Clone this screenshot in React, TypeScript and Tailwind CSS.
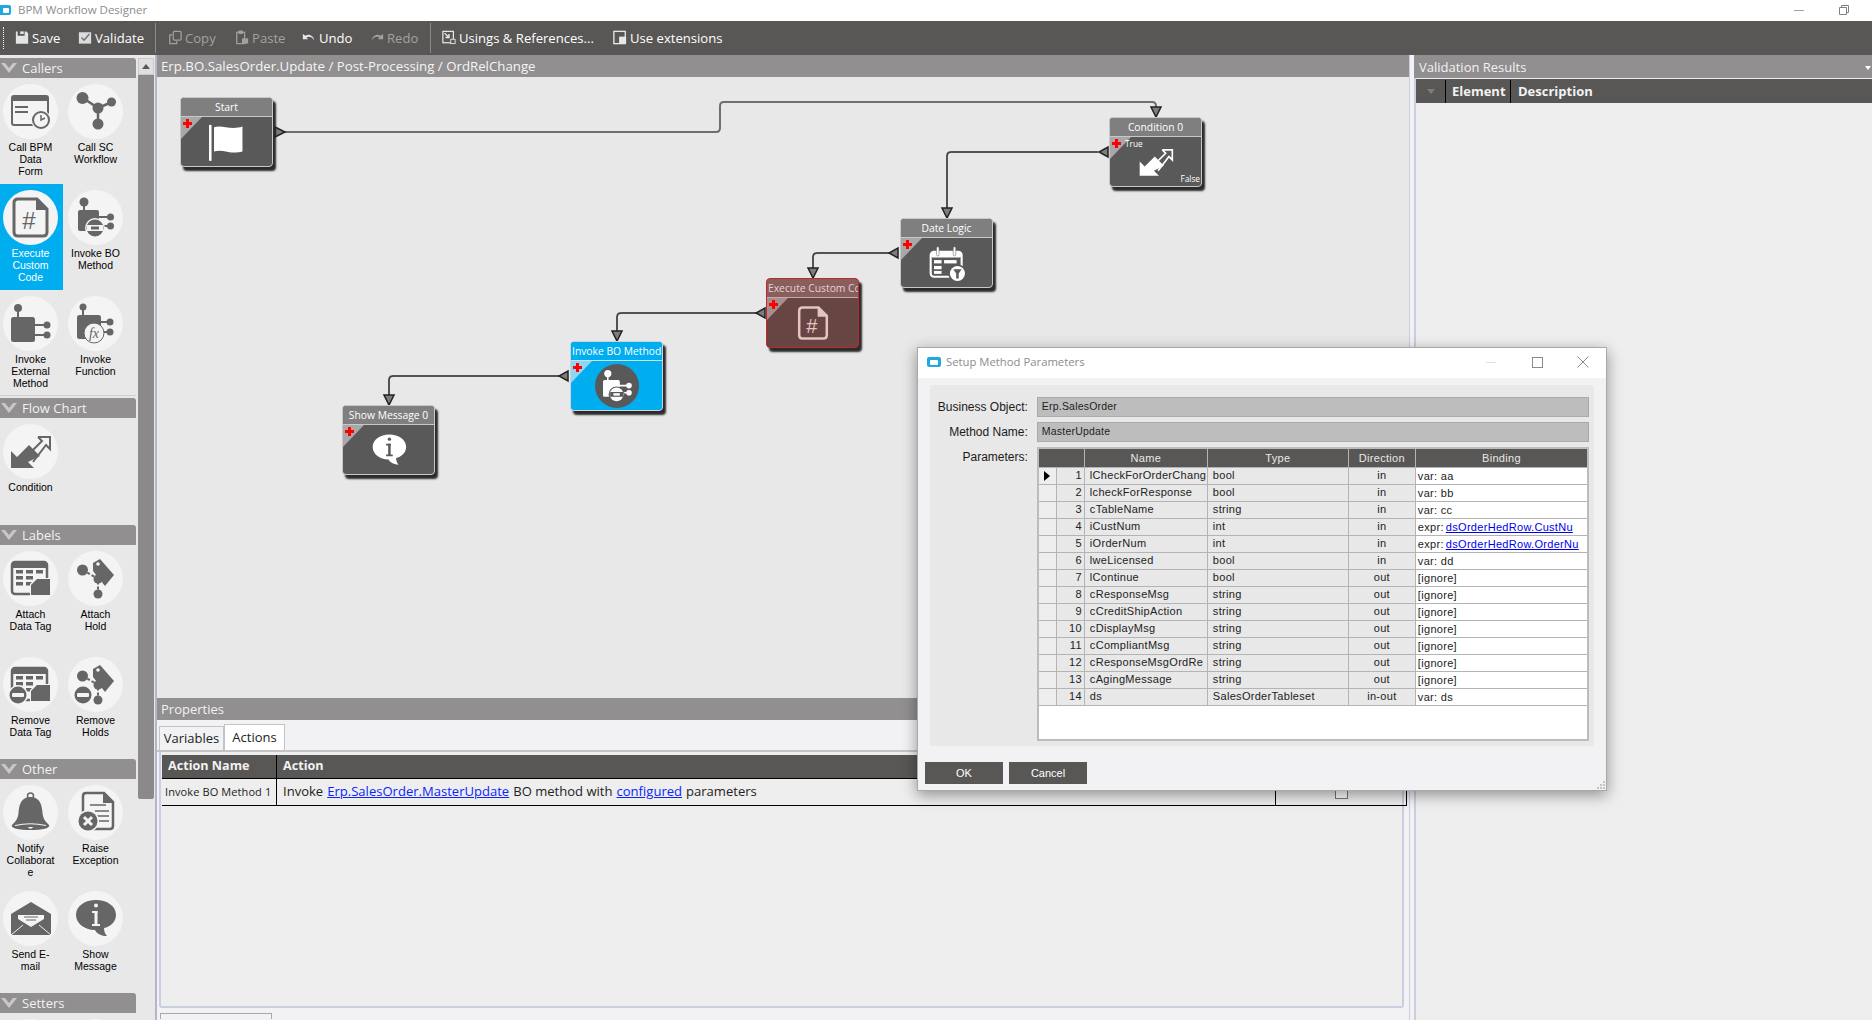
import type { ReactNode } from 'react'

const D = '#666666'

type IconProps = { c?: string; h?: string }

function Svg({ children }: { children: ReactNode }) {
  return (
    <svg viewBox="0 0 55 55" width="55" height="55">
      {children}
    </svg>
  )
}

function CallBpmIcon({ c = D, h = '#f4f4f4' }: IconProps) {
  return (
    <Svg>
      <rect x="9" y="12" width="36" height="29" rx="2" fill="none" stroke={c} strokeWidth="2" />
      <rect x="9" y="12" width="36" height="5" fill={c} />
      <rect x="12" y="22" width="13" height="2" fill={c} />
      <rect x="12" y="27" width="13" height="2" fill={c} />
      <circle cx="38" cy="36" r="10" fill={h} />
      <circle cx="38" cy="36" r="8" fill={h} stroke={c} strokeWidth="2" />
      <path d="M38 31v5l4 -2" fill="none" stroke={c} strokeWidth="1.5" />
    </Svg>
  )
}

function CallScIcon({ c = D }: IconProps) {
  return (
    <Svg>
      <path d="M15 14L30 24L44 18M30 24V40" fill="none" stroke={c} strokeWidth="2.5" />
      <circle cx="14.5" cy="14" r="6" fill={c} />
      <circle cx="43.5" cy="18" r="4.5" fill={c} />
      <circle cx="30" cy="24" r="5.5" fill={c} />
      <circle cx="30" cy="40" r="5.5" fill={c} />
    </Svg>
  )
}

function CodeIcon({ c = D }: IconProps) {
  return (
    <Svg>
      <path d="M15 9H34L44 19V42Q44 46 40 46H15Q11 46 11 42V13Q11 9 15 9Z" fill="none" stroke={c} strokeWidth="3" />
      <path d="M33 8L45 20H33Z" fill={c} />
      <text x="26" y="39" textAnchor="middle" fontSize="24" fontFamily="'Liberation Sans',sans-serif" fill={c}>
        #
      </text>
    </Svg>
  )
}

function InvokeBoIcon({ c = D, h = '#f4f4f4' }: IconProps) {
  return (
    <Svg>
      <path d="M16 12V22M30 27H42M30 36H42" stroke={c} strokeWidth="2" />
      <circle cx="16" cy="12" r="4.5" fill={c} />
      <rect x="10" y="20" width="21" height="21" rx="2" fill={c} />
      <circle cx="42.5" cy="27" r="3.5" fill={c} />
      <circle cx="42.5" cy="36" r="3.5" fill={c} />
      <circle cx="27" cy="38" r="10" fill={h} />
      <circle cx="27" cy="38" r="8.5" fill={c} />
      <rect x="19" y="35" width="16" height="6" fill={h} />
      <rect x="23" y="36.5" width="8" height="3" fill={c} />
    </Svg>
  )
}

function InvokeExternalIcon({ c = D }: IconProps) {
  return (
    <Svg>
      <path d="M15 12V22M30 29H44M30 39H44" stroke={c} strokeWidth="2" />
      <circle cx="15" cy="12" r="4" fill={c} />
      <rect x="8" y="21" width="24" height="25" rx="2.5" fill={c} />
      <circle cx="44" cy="29" r="3.5" fill={c} />
      <circle cx="44" cy="39" r="3.5" fill={c} />
    </Svg>
  )
}

function InvokeFunctionIcon({ c = D, h = '#f4f4f4' }: IconProps) {
  return (
    <Svg>
      <path d="M15 11V20M30 26H42M32 36H42" stroke={c} strokeWidth="2" />
      <circle cx="15" cy="11" r="3.5" fill={c} />
      <rect x="9" y="19" width="24" height="24" rx="2.5" fill={c} />
      <circle cx="42" cy="26" r="3.5" fill={c} />
      <circle cx="42" cy="36" r="3.5" fill={c} />
      <circle cx="26" cy="37" r="10" fill={h} stroke={c} strokeWidth="1" />
      <text x="26" y="42" textAnchor="middle" fontSize="14" fontStyle="italic" fontFamily="'Liberation Serif',serif" fill={c}>
        fx
      </text>
    </Svg>
  )
}

function ConditionIcon({ c = D }: IconProps) {
  return (
    <Svg>
      <path d="M8 44V27L14 33L26 21L37 32L25 38L31 44Z" fill={c} />
      <path d="M35 13H47V25L43 21L30 38M35 13L39 17L27 29" fill="none" stroke={c} strokeWidth="2" />
    </Svg>
  )
}

function MinusBadge({ c, h }: { c: string; h: string }) {
  return (
    <>
      <circle cx="15" cy="38" r="10" fill={h} />
      <circle cx="15" cy="38" r="8.5" fill={c} />
      <rect x="9" y="36" width="12" height="4" rx="1" fill={h} />
    </>
  )
}

function DataTagIcon({ c = D, h = '#f4f4f4', minus = false }: IconProps & { minus?: boolean }) {
  const cells = [
    [13, 19], [23, 19], [33, 19],
    [13, 25], [23, 25],
    [13, 31], [23, 31],
  ]
  return (
    <Svg>
      <rect x="9" y="11" width="35" height="32" rx="3" fill="none" stroke={c} strokeWidth="2.5" />
      <rect x="9" y="11" width="35" height="6" fill={c} />
      {cells.map(([x, y]) => (
        <rect key={`${x}-${y}`} x={x} y={y} width="7" height="3.5" fill={c} />
      ))}
      <path d="M33 27H48V45H27V33Z" fill={h} />
      <path d="M34 28H47V44H28V34Z" fill={c} />
      {minus && <MinusBadge c={c} h={h} />}
    </Svg>
  )
}

function HoldIcon({ c = D, h = '#f4f4f4', minus = false }: IconProps & { minus?: boolean }) {
  return (
    <Svg>
      <path d="M15 19L30 28V43" fill="none" stroke={c} strokeWidth="2" strokeDasharray="3 2" />
      <circle cx="14.5" cy="19" r="5.5" fill={c} />
      <circle cx="30" cy="28" r="4.5" fill={c} />
      <circle cx="30" cy="43" r="4.5" fill={c} />
      <path d="M25 12L32 8L46 24L37 35L25 20Z" fill={c} />
      <circle cx="30" cy="13" r="1.8" fill={h} />
      {minus && <MinusBadge c={c} h={h} />}
    </Svg>
  )
}

function BellIcon({ c = D, h = '#f4f4f4' }: IconProps) {
  return (
    <Svg>
      <circle cx="27.5" cy="11" r="3" fill="none" stroke={c} strokeWidth="1.5" />
      <path d="M27.5 12C18 12 16 20 15.5 28C15 34 12 37 9 40C7 43 16 45 27.5 45C39 45 48 43 46 40C43 37 40 34 39.5 28C39 20 37 12 27.5 12Z" fill={c} />
      <path d="M12 40.5Q27.5 37 43 40.5" fill="none" stroke={h} strokeWidth="1.2" />
      <path d="M24.5 42H30.5L27.5 44Z" fill={h} />
    </Svg>
  )
}

function RaiseIcon({ c = D, h = '#f4f4f4' }: IconProps) {
  return (
    <Svg>
      <path d="M18 8H36L45 17V41Q45 44 42 44H18Q15 44 15 41V11Q15 8 18 8Z" fill="none" stroke={c} strokeWidth="2.5" />
      <path d="M35 8L45 18H35Z" fill={c} />
      <path d="M22 20H38M27 26H41M27 31H41M31 36H41" stroke={c} strokeWidth="1.5" />
      <circle cx="20" cy="36" r="11" fill={h} />
      <circle cx="20" cy="36" r="9.5" fill={c} />
      <path d="M16 32L24 40M24 32L16 40" stroke={h} strokeWidth="3" />
    </Svg>
  )
}

function MailIcon({ c = D, h = '#f4f4f4' }: IconProps) {
  return (
    <Svg>
      <path d="M8 23L28 11L48 23V44H8Z" fill={c} />
      <path d="M15 24H41V28L28 36L15 28Z" fill={h} />
      <path d="M21 26H35M23 29H33" stroke={c} strokeWidth="1" />
      <path d="M8 44L20 34M48 44L36 34" stroke={h} strokeWidth="1" />
    </Svg>
  )
}

function MessageIcon({ c = D, h = '#f4f4f4' }: IconProps) {
  return (
    <Svg>
      <path d="M28 9C39 9 48 15 48 24C48 31 42 36 36 37C36 40 37 43 39 45C34 45 29 43 27 39C16 39 8 32 8 24C8 15 17 9 28 9Z" fill={c} />
      <rect x="26.5" y="20" width="3" height="14" fill={h} />
      <path d="M24 20H29.5V22H24ZM24 33H32V35H24Z" fill={h} />
      <circle cx="28" cy="14.5" r="2" fill={h} />
    </Svg>
  )
}

function FlagIcon({ c = '#fff' }: IconProps) {
  return (
    <Svg>
      <rect x="6" y="7" width="3" height="43" fill={c} />
      <path d="M12 10C20 6 32 14 46 9V39C32 43 22 35 12 39Z" fill={c} />
    </Svg>
  )
}

function DateLogicIcon({ c = '#fff', h = '#595959' }: IconProps) {
  return (
    <Svg>
      <rect x="8" y="14" width="37" height="30" rx="4" fill="none" stroke={c} strokeWidth="2.5" />
      <rect x="8" y="14" width="37" height="7" rx="3" fill={c} />
      <rect x="15" y="8" width="3" height="11" rx="1.5" fill={c} stroke={h} strokeWidth="0.6" />
      <rect x="35" y="8" width="3" height="11" rx="1.5" fill={c} stroke={h} strokeWidth="0.6" />
      <rect x="12" y="24" width="9" height="4" fill={c} />
      <rect x="12" y="31" width="9" height="4" fill={c} />
      <rect x="12" y="37" width="9" height="3.5" fill={c} />
      <rect x="24" y="24" width="15" height="4" fill={c} />
      <circle cx="40" cy="40" r="11" fill={h} />
      <circle cx="40" cy="40" r="9" fill={c} />
      <path d="M35 35H45L41.5 40V46H38.5V40Z" fill={h} />
    </Svg>
  )
}

function PaletteItem({ label, icon, active, left }: { label: string[]; icon?: ReactNode; active?: boolean; left?: boolean }) {
  return (
    <div className={`flex h-[106px] flex-col items-center pt-[6px] ${left ? 'pr-[2px]' : ''} ${active ? 'bg-[#00adef] text-white' : 'text-black'}`}>
      <div className="flex h-[55px] w-[55px] shrink-0 items-center justify-center rounded-full bg-[#f4f4f4]">{icon}</div>
      <div className="mt-[2px] text-center text-[10.5px] leading-[12px]">
        {label.map((l) => (
          <div key={l} className="whitespace-nowrap">
            {l}
          </div>
        ))}
      </div>
    </div>
  )
}

function PaletteSection({ title, className, children }: { title: string; className: string; children: ReactNode }) {
  return (
    <div className={`overflow-hidden ${className}`}>
      <div className="flex h-[20px] items-center rounded-tr-[3px] bg-[#918f8f] font-['Open_Sans',sans-serif] text-[13px] text-[#f2f2f2]">
        <svg viewBox="0 0 16 12" width="16" height="12" className="ml-[1px] mr-[5px]">
          <path d="M0 1H4L8 6L12 1H16L8 11Z" fill="#c9c7c7" />
        </svg>
        <span className="pt-[1px]">{title}</span>
      </div>
      <div className="grid grid-cols-[63px_65px] items-start">{children}</div>
    </div>
  )
}

function ToolButton({ icon, label, off, className }: { icon: ReactNode; label: string; off?: boolean; className: string }) {
  return (
    <div className={`flex shrink-0 items-center gap-[3px] whitespace-nowrap ${off ? 'text-[#a3a1a0]' : 'text-white'} ${className}`}>
      {icon}
      <span className="pt-[1px]">{label}</span>
    </div>
  )
}

function ToolIcon({ children }: { children: ReactNode }) {
  return (
    <svg viewBox="0 0 16 16" width="14" height="15" fill="none" className="shrink-0">
      {children}
    </svg>
  )
}

function Node({ title, className, tone = 'gray', icon, children }: { title: string; className: string; tone?: 'gray' | 'blue' | 'red'; icon: ReactNode; children?: ReactNode }) {
  const body = tone === 'blue' ? 'bg-[#00adef] border-[#c9d6dc]' : tone === 'red' ? 'bg-[#664543] border-[#c1272d]' : 'bg-[#595959] border-[#c8c8c8]'
  const head = tone === 'blue' ? 'bg-[#00adef] border-[#c9e4ef] text-white' : tone === 'red' ? 'bg-[#875f5d] border-[#c9a9a7] text-[#ecd0ce]' : 'bg-[#7f7f7f] border-[#c8c8c8] text-white'
  const tri = tone === 'blue' ? 'border-t-[#8fd6f2]' : tone === 'red' ? 'border-t-[#a58e8c]' : 'border-t-[#a9a7a7]'
  return (
    <div className={`absolute h-[70px] w-[93px] rounded-[4px] border shadow-[3px_4px_2px_#2b2b2b] ${body} ${className}`}>
      <div className={`h-[19px] overflow-hidden whitespace-nowrap rounded-t-[3px] border-b px-[1px] text-center font-['Open_Sans',sans-serif] text-[10.3px] leading-[18px] ${head}`}>{title}</div>
      <div className={`absolute left-0 top-[19px] h-0 w-0 border-r-[21px] border-t-[22px] border-r-transparent ${tri}`} />
      <div className="absolute left-[2px] top-[21px] z-10 h-[9px] w-[9px]">
        <div className="absolute left-[3px] top-0 h-[9px] w-[3px] bg-[#ff0000]" />
        <div className="absolute left-0 top-[3px] h-[3px] w-[9px] bg-[#ff0000]" />
      </div>
      <div className="absolute inset-x-0 bottom-0 top-[19px] flex items-center justify-center [&_svg]:h-[46px] [&_svg]:w-[46px]">{icon}</div>
      {children}
    </div>
  )
}

function Flow() {
  const lines = [
    'M128 55H559Q563 55 563 51V29Q563 25 567 25H995Q999 25 999 29V32',
    'M941 75H794Q790 75 790 79V135',
    'M732 176H660Q656 176 656 180V193',
    'M599 236H464Q460 236 460 240V256',
    'M402 299H236Q232 299 232 303V322',
  ]
  const downs = [
    [999, 30],
    [790, 131],
    [656, 191],
    [460, 254],
    [232, 318],
  ]
  const lefts = [
    [951, 75],
    [741, 176],
    [608, 236],
    [411, 299],
  ]
  return (
    <svg className="absolute inset-0" width="1253" height="621">
      {lines.map((d, i) => (
        <g key={d}>
          <path d={d} fill="none" stroke="#6f6f6f" strokeWidth="2" />
          {i > 0 && <path d={d} fill="none" stroke="#111" strokeWidth="0.6" />}
        </g>
      ))}
      <polygon points="118,50 128,55 118,60" fill="#7d7d7d" stroke="#222" strokeWidth="1.5" />
      {downs.map(([x, y]) => (
        <polygon key={x} points={`${x - 5},${y} ${x + 5},${y} ${x},${y + 10}`} fill="#7d7d7d" stroke="#222" strokeWidth="1.5" />
      ))}
      {lefts.map(([x, y]) => (
        <polygon key={x} points={`${x},${y - 5} ${x},${y + 5} ${x - 9},${y}`} fill="#7d7d7d" stroke="#222" strokeWidth="1.5" />
      ))}
    </svg>
  )
}

function Expr({ v }: { v: string }) {
  return (
    <span>
      expr:<span className="ml-[2px] text-[#0000ee] underline">{v}</span>
    </span>
  )
}

const params: [number, string, string, string, ReactNode][] = [
  [1, 'lCheckForOrderChang', 'bool', 'in', 'var: aa'],
  [2, 'lcheckForResponse', 'bool', 'in', 'var: bb'],
  [3, 'cTableName', 'string', 'in', 'var: cc'],
  [4, 'iCustNum', 'int', 'in', <Expr key="c" v="dsOrderHedRow.CustNu" />],
  [5, 'iOrderNum', 'int', 'in', <Expr key="o" v="dsOrderHedRow.OrderNu" />],
  [6, 'lweLicensed', 'bool', 'in', 'var: dd'],
  [7, 'lContinue', 'bool', 'out', '[ignore]'],
  [8, 'cResponseMsg', 'string', 'out', '[ignore]'],
  [9, 'cCreditShipAction', 'string', 'out', '[ignore]'],
  [10, 'cDisplayMsg', 'string', 'out', '[ignore]'],
  [11, 'cCompliantMsg', 'string', 'out', '[ignore]'],
  [12, 'cResponseMsgOrdRe', 'string', 'out', '[ignore]'],
  [13, 'cAgingMessage', 'string', 'out', '[ignore]'],
  [14, 'ds', 'SalesOrderTableset', 'in-out', 'var: ds'],
]

function SetupDialog() {
  return (
    <div className="absolute left-[917px] top-[347px] flex h-[444px] w-[690px] flex-col border border-[#a9a9a9] bg-[#f2f2f4] font-['Liberation_Sans',sans-serif] shadow-[0_4px_14px_rgba(0,0,0,0.4)]">
      <div className="flex h-[30px] shrink-0 items-center bg-white pb-[2px] pl-[9px] pr-[17px]">
        <div className="flex h-[10px] w-[14px] items-center justify-center rounded-[2px] bg-[#1fa9e0]">
          <div className="h-[5px] w-[8px] rounded-[1px] bg-white" />
        </div>
        <span className="ml-[5px] font-['Open_Sans',sans-serif] text-[11.3px] text-[#8c8c8c]">Setup Method Parameters</span>
        <div className="ml-auto h-[1px] w-[10px] bg-[#e0e0e0]" />
        <div className="ml-[36px] h-[11px] w-[11px] border border-[#8a8a8a]" />
        <svg viewBox="0 0 12 12" width="12" height="12" className="ml-[34px]">
          <path d="M0.5 0.5L11.5 11.5M11.5 0.5L0.5 11.5" stroke="#8a8a8a" />
        </svg>
      </div>
      <div className="mx-[12px] mt-[7px] h-[361px] rounded-[3px] bg-[#e8e8e8] pl-[7px] pr-[5px] pt-[12px]">
        <div className="flex h-[20px] items-center">
          <div className="w-[91px] whitespace-nowrap text-right text-[12px] text-[#1a1a1a]">Business Object:</div>
          <div className="ml-[9px] flex h-full w-[553px] items-center border border-[#aaaaaa] bg-[#bdbdbd] pl-[4px] text-[10.5px] tracking-[0.2px] text-[#222]">Erp.SalesOrder</div>
        </div>
        <div className="mt-[5px] flex h-[20px] items-center">
          <div className="w-[91px] whitespace-nowrap text-right text-[12px] text-[#1a1a1a]">Method Name:</div>
          <div className="ml-[9px] flex h-full w-[553px] items-center border border-[#aaaaaa] bg-[#bdbdbd] pl-[4px] text-[10.5px] tracking-[0.2px] text-[#222]">MasterUpdate</div>
        </div>
        <div className="mt-[5px] flex items-start">
          <div className="w-[91px] pt-[1px] text-right text-[12px] text-[#1a1a1a]">Parameters:</div>
          <div className="ml-[9px] h-[294px] w-[553px] border-2 border-[#bcbcbc] bg-white text-[11px] tracking-[0.3px]">
            <div className="grid h-[19px] grid-cols-[18px_28px_123px_141px_67px_1fr] border-b border-[#b4b4b4] bg-[#595755] text-center leading-[18px] text-[#e8e8e8]">
              <div />
              <div className="border-r border-[#b4b4b4]" />
              <div className="border-r border-[#b4b4b4]">Name</div>
              <div className="border-r border-[#b4b4b4]">Type</div>
              <div className="border-r border-[#b4b4b4]">Direction</div>
              <div>Binding</div>
            </div>
            {params.map(([n, name, type, dir, bind]) => (
              <div key={n} className="grid h-[17px] grid-cols-[18px_28px_123px_141px_67px_1fr] border-b border-[#b4b4b4] leading-[15px] text-[#222]">
                <div className="flex items-center justify-center border-r border-[#b4b4b4] bg-[#eeeeee]">
                  {n === 1 && (
                    <svg viewBox="0 0 6 10" width="6" height="10">
                      <path d="M0 0L6 5L0 10Z" fill="#000" />
                    </svg>
                  )}
                </div>
                <div className="border-r border-[#b4b4b4] bg-[#e8e8e8] pr-[2px] text-right">{n}</div>
                <div className="overflow-hidden whitespace-nowrap border-r border-[#b4b4b4] bg-[#e8e8e8] pl-[5px]">{name}</div>
                <div className="border-r border-[#b4b4b4] bg-[#e8e8e8] pl-[5px]">{type}</div>
                <div className="border-r border-[#b4b4b4] bg-[#e8e8e8] text-center">{dir}</div>
                <div className="overflow-hidden whitespace-nowrap pl-[2px] pt-[1px]">{bind}</div>
              </div>
            ))}
          </div>
        </div>
      </div>
      <div className="ml-[7px] mt-[16px] flex gap-[6px]">
        <div className="flex h-[22px] w-[78px] items-center justify-center bg-[#595755] text-[11px] text-white">OK</div>
        <div className="flex h-[22px] w-[78px] items-center justify-center bg-[#595755] text-[11px] text-white">Cancel</div>
      </div>
      <svg viewBox="0 0 8 8" width="8" height="8" className="absolute bottom-[1px] right-[1px]">
        <path d="M6 0h2v2h-2zM3 3h2v2h-2zM6 3h2v2h-2zM0 6h2v2h-2zM3 6h2v2h-2zM6 6h2v2h-2z" fill="#c4c4c4" />
      </svg>
    </div>
  )
}

function Toolbar() {
  return (
    <div className="flex h-[34px] shrink-0 items-center bg-[#595755] font-['Open_Sans',sans-serif] text-[13.1px]">
      <div className="ml-[3px] h-[22px] w-[1px] border-l border-dotted border-white" />
      <ToolButton className="ml-[11px] w-[63px]" label="Save" icon={<ToolIcon><path d="M1 1H3V6H11V1H13L15 3V15H1Z" fill="#e4e4e4" /><rect x="6" y="1" width="4" height="3" fill="#e4e4e4" /></ToolIcon>} />
      <ToolButton className="w-[77px]" label="Validate" icon={<ToolIcon><rect x="1" y="2" width="14" height="13" fill="#dcdcdc" /><path d="M4 8L7 11L13 4" stroke="#6f6f6f" strokeWidth="1.6" /></ToolIcon>} />
      <div className="h-[30px] w-[1px] shrink-0 bg-[#8d8b89]" />
      <ToolButton off className="ml-[12px] w-[67px]" label="Copy" icon={<ToolIcon><rect x="6" y="1" width="9" height="10" rx="1.5" stroke="#a3a1a0" strokeWidth="1.4" /><path d="M5 5H2V15H10V12" stroke="#a3a1a0" strokeWidth="1.4" /></ToolIcon>} />
      <ToolButton off className="w-[67px]" label="Paste" icon={<ToolIcon><rect x="2" y="2" width="9" height="13" stroke="#a3a1a0" strokeWidth="1.4" /><rect x="4" y="0" width="5" height="4" fill="#a3a1a0" /><rect x="8" y="9" width="7" height="6" fill="#a3a1a0" /></ToolIcon>} />
      <ToolButton className="w-[68px]" label="Undo" icon={<ToolIcon><path d="M1 4V10H7L5 8C8 6 11 7 14 11C13 6 8 3 4 6Z" fill="#e8e8e8" /></ToolIcon>} />
      <ToolButton off className="w-[60px]" label="Redo" icon={<ToolIcon><path d="M15 4V10H9L11 8C8 6 5 7 2 11C3 6 8 3 12 6Z" fill="#a3a1a0" /></ToolIcon>} />
      <div className="h-[30px] w-[1px] shrink-0 bg-[#8d8b89]" />
      <ToolButton className="ml-[11px] w-[171px]" label="Usings & References..." icon={<ToolIcon><rect x="1" y="1" width="12" height="13" stroke="#e8e8e8" strokeWidth="1.4" /><path d="M3 3L8 8M4 8H8V4" stroke="#e8e8e8" strokeWidth="1.6" /><rect x="10" y="10" width="5" height="5" fill="#595755" stroke="#e8e8e8" /></ToolIcon>} />
      <ToolButton label="Use extensions" className="" icon={<ToolIcon><rect x="1" y="1" width="13" height="14" stroke="#e8e8e8" strokeWidth="1.5" /><rect x="7" y="7" width="8" height="8" fill="#e8e8e8" /></ToolIcon>} />
    </div>
  )
}

function Palette() {
  return (
    <div className="flex w-[157px] shrink-0 border-r-2 border-[#b4b5c6] bg-[#e8e8e8] pt-[3px]">
      <div className="w-[136px] shrink-0">
        <PaletteSection title="Callers" className="mb-[2px] h-[338px] border-b border-[#cfcfcf]">
          <PaletteItem left label={['Call BPM', 'Data', 'Form']} icon={<CallBpmIcon />} />
          <PaletteItem label={['Call SC', 'Workflow']} icon={<CallScIcon />} />
          <PaletteItem left active label={['Execute', 'Custom', 'Code']} icon={<CodeIcon />} />
          <PaletteItem label={['Invoke BO', 'Method']} icon={<InvokeBoIcon />} />
          <PaletteItem left label={['Invoke', 'External', 'Method']} icon={<InvokeExternalIcon />} />
          <PaletteItem label={['Invoke', 'Function']} icon={<InvokeFunctionIcon />} />
        </PaletteSection>
        <PaletteSection title="Flow Chart" className="h-[127px]">
          <PaletteItem left label={['Condition']} icon={<ConditionIcon />} />
        </PaletteSection>
        <PaletteSection title="Labels" className="h-[234px]">
          <PaletteItem left label={['Attach', 'Data Tag']} icon={<DataTagIcon />} />
          <PaletteItem label={['Attach', 'Hold']} icon={<HoldIcon />} />
          <PaletteItem left label={['Remove', 'Data Tag']} icon={<DataTagIcon minus />} />
          <PaletteItem label={['Remove', 'Holds']} icon={<HoldIcon minus />} />
        </PaletteSection>
        <PaletteSection title="Other" className="h-[234px]">
          <PaletteItem left label={['Notify', 'Collaborat', 'e']} icon={<BellIcon />} />
          <PaletteItem label={['Raise', 'Exception']} icon={<RaiseIcon />} />
          <PaletteItem left label={['Send E-', 'mail']} icon={<MailIcon />} />
          <PaletteItem label={['Show', 'Message']} icon={<MessageIcon />} />
        </PaletteSection>
        <PaletteSection title="Setters" className="h-[27px]">
          <PaletteItem left label={[]} />
          <PaletteItem label={[]} />
        </PaletteSection>
      </div>
      <div className="ml-[2px] w-[16px] shrink-0">
        <div className="flex h-[17px] items-center justify-center border border-[#c8c8c8] bg-[#e0e0e0]">
          <div className="h-0 w-0 border-x-[4px] border-b-[5px] border-x-transparent border-b-[#595755]" />
        </div>
        <div className="h-[724px] rounded-b-[2px] bg-[#8b8989]" />
      </div>
    </div>
  )
}

function Canvas() {
  return (
    <div className="relative h-[621px] shrink-0 bg-[#e8e8e8]">
      <Flow />
      <Node title="Start" className="left-[23px] top-[20px]" icon={<FlagIcon />} />
      <Node title="Condition 0" className="left-[952px] top-[40px]" icon={<ConditionIcon c="#fff" />}>
        <span className="absolute left-[15px] top-[20px] font-['Open_Sans',sans-serif] text-[8.3px] text-white">True</span>
        <span className="absolute bottom-[1px] right-[1px] font-['Open_Sans',sans-serif] text-[8.3px] leading-[12px] text-white">False</span>
      </Node>
      <Node title="Date Logic" className="left-[743px] top-[141px]" icon={<DateLogicIcon />} />
      <Node title="Execute Custom Code" tone="red" className="left-[609px] top-[201px]" icon={<CodeIcon c="#e4c4c0" />} />
      <Node
        title="Invoke BO Method"
        tone="blue"
        className="left-[413px] top-[264px]"
        icon={
          <div className="flex h-[44px] w-[44px] items-center justify-center rounded-full bg-[#595959] [&_svg]:h-[34px] [&_svg]:w-[34px]">
            <InvokeBoIcon c="#fff" h="#595959" />
          </div>
        }
      />
      <Node title="Show Message 0" className="left-[185px] top-[328px]" icon={<MessageIcon c="#fff" h="#595959" />} />
    </div>
  )
}

function Properties() {
  return (
    <div className="flex min-h-0 flex-1 flex-col bg-[#f2f2f4]">
      <div className="flex h-[22px] shrink-0 items-center bg-[#918f8f] pl-[4px] pt-[1px] font-['Open_Sans',sans-serif] text-[13px] text-[#f2f2f2]">Properties</div>
      <div className="flex h-[32px] shrink-0 items-end border-b-2 border-[#c4c4c4] pl-[2px] font-['Open_Sans',sans-serif] text-[13px] text-[#222]">
        <div className="flex h-[24px] w-[65px] items-center justify-center border border-b-0 border-[#c4c4c4] pt-[1px]">Variables</div>
        <div className="flex h-[26px] w-[61px] items-center justify-center border border-b-0 border-[#c4c4c4] bg-white pt-[1px]">Actions</div>
      </div>
      <div className="ml-[2px] mr-[5px] h-[256px] shrink-0 rounded-b-[3px] border-2 border-t-0 border-[#c9cfe0] bg-[#eeeeee] pl-[1px] pt-[3px] font-['Open_Sans',sans-serif]">
        <div className="grid h-[23px] w-[1245px] grid-cols-[115px_999px_131px] bg-[#595755] text-[12.6px] font-bold leading-[22px] text-[#f2f2f2]">
          <div className="border-r border-black pl-[6px]">Action Name</div>
          <div className="border-r border-black pl-[6px]">Action</div>
          <div />
        </div>
        <div className="grid h-[28px] w-[1245px] grid-cols-[115px_999px_131px] border-y border-r border-black text-[#222]">
          <div className="flex items-center border-r border-black pl-[3px] text-[11px] tracking-[0.1px]">Invoke BO Method 1</div>
          <div className="flex items-center gap-[4px] whitespace-nowrap border-r border-black pl-[6px] text-[13.05px]">
            Invoke <span className="text-[#0b24fb] underline">Erp.SalesOrder.MasterUpdate</span> BO method with <span className="text-[#0b24fb] underline">configured</span> parameters
          </div>
          <div className="flex items-center justify-center">
            <div className="h-[13px] w-[13px] border border-[#777] bg-white" />
          </div>
        </div>
      </div>
      <div className="ml-[3px] mt-[5px] h-[6px] w-[112px] border border-b-0 border-[#a9a9a9] bg-[#f2f2f4]" />
    </div>
  )
}

function ValidationPanel() {
  return (
    <div className="flex min-w-0 flex-1 flex-col bg-[#f2f2f4] pl-[4px]">
      <div className="flex h-[23px] shrink-0 items-center bg-[#918f8f] pl-[5px] pr-[1px] pt-[2px] font-['Open_Sans',sans-serif] text-[13px] text-[#f2f2f2]">
        Validation Results
        <div className="ml-auto h-0 w-0 border-x-[3px] border-t-[4px] border-x-transparent border-t-white" />
      </div>
      <div className="flex min-h-0 flex-1 flex-col border-l-2 border-[#c9cfe0] bg-[#eeeeee] pt-[1px]">
        <div className="flex h-[24px] shrink-0 items-center bg-[#595755] pt-[1px] font-['Open_Sans',sans-serif] text-[13px] font-bold text-[#f2f2f2]">
          <div className="flex h-full w-[30px] items-center justify-center border-r border-black">
            <div className="h-0 w-0 border-x-[4px] border-t-[5px] border-x-transparent border-t-[#7f7d7b]" />
          </div>
          <div className="flex h-full w-[65px] items-center border-r border-black pl-[6px]">Element</div>
          <div className="pl-[7px]">Description</div>
        </div>
      </div>
    </div>
  )
}

export default function App() {
  return (
    <div className="relative flex h-[1020px] w-[1872px] flex-col overflow-hidden bg-[#eeeeee] font-['Liberation_Sans',sans-serif]">
      <div className="flex h-[21px] shrink-0 items-center bg-white pb-[1px]">
        <div className="flex h-[10px] w-[11px] items-center justify-end rounded-r-[2px] bg-[#1fa9e0]">
          <div className="mr-[2px] h-[5px] w-[6px] rounded-[1px] bg-white" />
        </div>
        <span className="ml-[7px] font-['Open_Sans',sans-serif] text-[11.5px] text-[#8c8c8c]">BPM Workflow Designer</span>
        <div className="ml-auto h-[1px] w-[10px] bg-[#a0a0a0]" />
        <svg viewBox="0 0 10 10" width="10" height="10" className="ml-[35px] mr-[23px]">
          <path d="M2.5 2.5V0.5H9.5V7.5H7.5M0.5 2.5H7.5V9.5H0.5Z" fill="none" stroke="#808080" />
        </svg>
      </div>
      <Toolbar />
      <div className="flex min-h-0 flex-1">
        <Palette />
        <div className="flex w-[1253px] shrink-0 flex-col border-r border-[#c9cfe0]">
          <div className="flex h-[22px] shrink-0 items-center bg-[#918f8f] pl-[4px] pt-[1px] font-['Open_Sans',sans-serif] text-[13.25px] text-[#f6f6f6]">Erp.BO.SalesOrder.Update / Post-Processing / OrdRelChange</div>
          <Canvas />
          <Properties />
        </div>
        <ValidationPanel />
      </div>
      <SetupDialog />
    </div>
  )
}
